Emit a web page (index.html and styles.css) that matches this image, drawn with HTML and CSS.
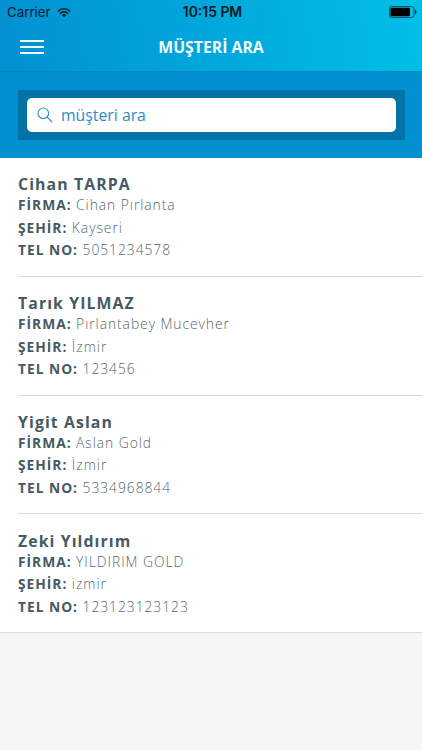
FILE: index.html
```html
<!DOCTYPE html>
<html lang="tr">
<head>
<meta charset="utf-8">
<title>Müşteri Ara</title>
<link rel="stylesheet" href="styles.css">
</head>
<body>
<header class="top">
  <div class="status">
    <div class="carrier"><span>Carrier</span>
      <svg width="14" height="11" viewBox="0 0 15 11" fill="none" stroke="#06202c" stroke-width="1.8"><path d="M1 4.2a9.2 9.2 0 0 1 13 0M3.3 6.6a6 6 0 0 1 8.4 0"/><path d="M7.5 10.6L5.2 8.3a3.2 3.2 0 0 1 4.6 0z" fill="#06202c" stroke="none"/></svg>
    </div>
    <div class="time">10:15 PM</div>
    <svg class="battery" width="28" height="12" viewBox="0 0 28 12"><rect x=".5" y=".5" width="24.5" height="11" rx="2" fill="none" stroke="#06343f" stroke-width=".8"/><rect x="1.5" y="1.700" width="19.500" height="8.600" rx="1" fill="#000"/><path d="M26 4c2 .5 2 3.500 0 4z" fill="#06202c"/></svg>
  </div>
  <div class="nav">
    <svg class="menu" width="24" height="14" viewBox="0 0 24 14"><path d="M0 1h24M0 7h24M0 13h24" stroke="#f2fbff" stroke-width="1.8"/></svg>
    <h1>MÜŞTERİ ARA</h1>
    <span></span>
  </div>
</header>
<section class="search">
  <div class="frame">
    <div class="field">
      <svg width="16" height="16" viewBox="0 0 16 16" fill="none" stroke="#3694c5" stroke-width="1.2"><circle cx="6.300" cy="6.300" r="5.300"/><path d="M10.200 10.200l4.800 4.800"/></svg>
      <span>müşteri ara</span>
    </div>
  </div>
</section>
<main class="list">
  <article><h2>Cihan TARPA</h2><p><b>FİRMA:</b> Cihan Pırlanta</p><p><b>ŞEHİR:</b> Kayseri</p><p><b>TEL NO:</b> 5051234578</p></article>
  <article><h2>Tarık YILMAZ</h2><p><b>FİRMA:</b> Pırlantabey Mucevher</p><p><b>ŞEHİR:</b> İzmir</p><p><b>TEL NO:</b> 123456</p></article>
  <article><h2>Yigit Aslan</h2><p><b>FİRMA:</b> Aslan Gold</p><p><b>ŞEHİR:</b> İzmir</p><p><b>TEL NO:</b> 5334968844</p></article>
  <article><h2>Zeki Yıldırım</h2><p><b>FİRMA:</b> YILDIRIM GOLD</p><p><b>ŞEHİR:</b> izmir</p><p><b>TEL NO:</b> 123123123123</p></article>
</main>
</body>
</html>
```
FILE: styles.css
```css
* { box-sizing: border-box; }
body { margin: 0; height: 750px; overflow: hidden; background: #f6f6f6; font-family: "Open Sans", sans-serif; color: #455a64; }
h1, h2, p { margin: 0; }
.top { height: 72px; background: linear-gradient(80deg, #0290d2, #00bfe6); border-bottom: 1px solid #0388c0; }
.status { height: 24px; display: grid; grid-template-columns: 1fr auto 1fr; align-items: center; padding: 0 5px 0 7px; font-family: Inter, sans-serif; color: #06202c; font-size: 13.3px; }
.carrier { display: flex; align-items: center; gap: 6px; }
.time { padding-left: 1px; font-size: 13.9px; font-weight: 600; color: #041820; }
.battery { justify-self: end; }
.nav { height: 46px; display: grid; grid-template-columns: 1fr auto 1fr; align-items: center; padding: 0 20px; }
h1 { font-size: 15.8px; font-weight: 700; line-height: 20px; color: #f2fbff; }
.search { height: 86px; padding: 18px 17px 18px 18px; background: #0290d2; }
.frame { height: 50px; padding: 8px 9px; background: #0173a7; }
.field { height: 34px; border-radius: 5px; background: #fff; display: flex; align-items: center; gap: 8px; padding-left: 10px; color: #2c8dc2; font-size: 15.8px; }
.list { background: #fff; border-bottom: 1px solid #dcdcdc; }
article { height: 118.8px; margin-left: 18px; padding-top: 16.3px; border-bottom: 1px solid #d8dadb; }
article:last-child { border-bottom: 0; height: 118px; }
h2 { font-size: 15.8px; line-height: 20px; font-weight: 700; letter-spacing: 1.1px; }
p { font-size: 13.8px; line-height: 22.5px; font-weight: 300; letter-spacing: 0.97px; color: #56666e; }
b { font-weight: 700; color: #455a64; }
```
